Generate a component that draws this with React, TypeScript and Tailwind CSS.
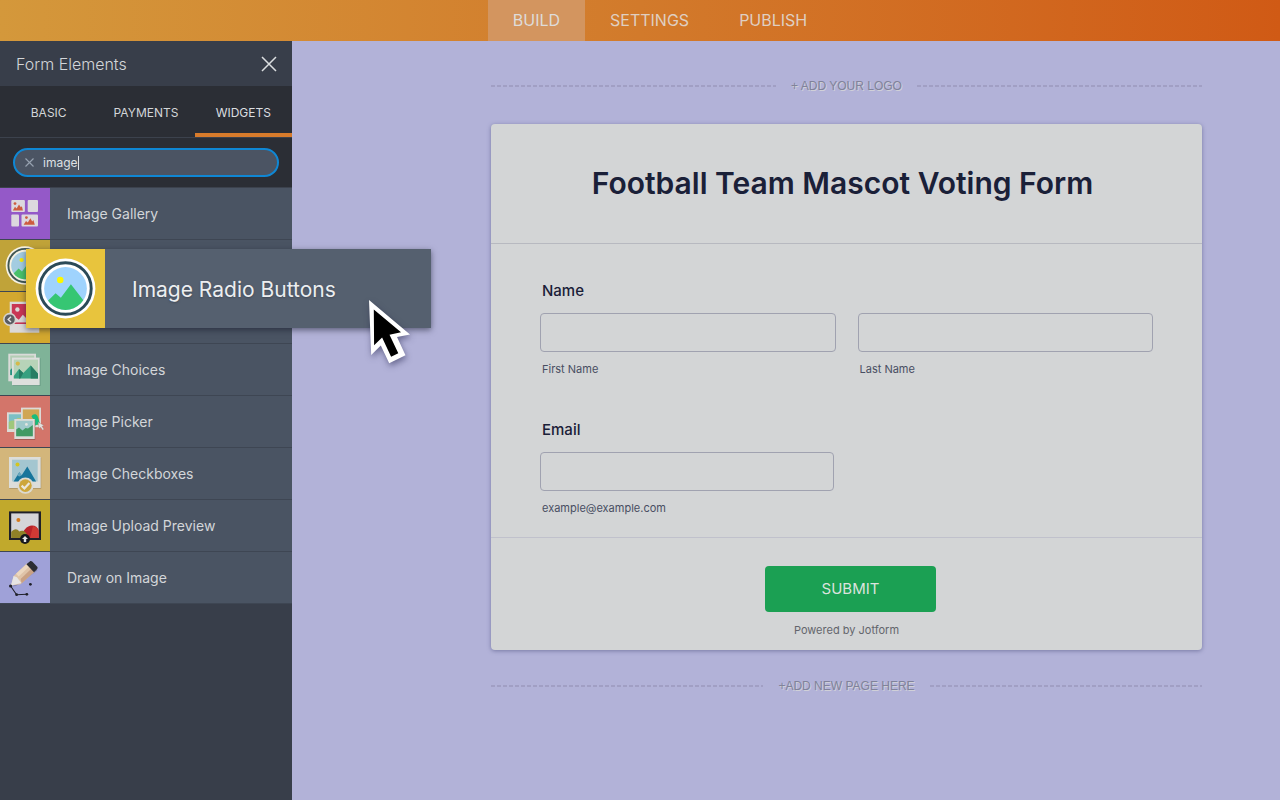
import { useState, type ReactNode } from 'react';

type Widget = {
  id: string;
  label: string;
  tile: string;
  icon: ReactNode;
  // rows that sit under the dragged card draw no label
  covered?: boolean;
};

function Glyph({ children, className = 'h-full w-full' }: { children: ReactNode; className?: string }) {
  return (
    <svg viewBox="0 0 50 51" className={className} aria-hidden="true">
      {children}
    </svg>
  );
}

function RadioGlyph({ clip }: { clip: string }) {
  return (
    <>
      <clipPath id={clip}>
        <circle cx="25" cy="25.5" r="13.8" />
      </clipPath>
      <circle cx="25" cy="25.5" r="19.3" fill="#fff" />
      <circle cx="25" cy="25.5" r="16.6" fill="none" stroke="#2b4a58" strokeWidth="1.9" />
      <circle cx="25" cy="25.5" r="13.8" fill="#9fd3fd" />
      <g clipPath={`url(#${clip})`}>
        <circle cx="21.6" cy="20" r="2.1" fill="#fdf700" />
        <path d="M12 35l6.6-6.4 3.4 2.8 6.5-8.6L38 35v6H12z" fill="#36c673" />
      </g>
    </>
  );
}

function GalleryIcon() {
  return (
    <Glyph>
      <g fill="#dcd8de">
        <rect x="11.3" y="12" width="13.6" height="12" rx="1" />
        <rect x="27.7" y="12" width="10.3" height="12" rx="1" />
        <rect x="11.3" y="26.5" width="7.7" height="12" rx="1" />
        <rect x="21.5" y="26.5" width="16.5" height="12" rx="1" />
      </g>
      <g fill="#cd5c40">
        <circle cx="15" cy="15.6" r="1.4" />
        <path d="M12.8 22.4l2.2-3.6 1.6 1.6 2.4-3.8 1.8 2.6 1.1-1 1 4.2z" />
        <circle cx="26.4" cy="29.6" r="1.4" />
        <path d="M23.6 36.8l2.4-3.8 1.8 1.6 2.6-4.4 1.8 3.2 1.2-1.4 1.4 4.8z" />
      </g>
    </Glyph>
  );
}

function SliderIcon() {
  return (
    <Glyph>
      <path d="M9.7 9.7h29.6v31H9.7z" fill="#dcd9d9" />
      <path d="M11.8 12h26v17.6h-26z" fill="#c93655" />
      <circle cx="17.4" cy="17.5" r="2.2" fill="#dcd9d9" />
      <path d="M11.8 29.6l4-4 3 2.2 4-5 5 5 3-2 7 4.8v3h-26z" fill="#dcd9d9" />
      <path d="M12 31.2h26" stroke="#c93655" strokeWidth="1.6" />
      <circle cx="9.7" cy="27.4" r="6.6" fill="#d5d3d0" />
      <circle cx="9.7" cy="27.4" r="5" fill="#5b5d62" />
      <path d="M11 24.8l-2.8 2.6 2.8 2.6" fill="none" stroke="#e4e4e4" strokeWidth="1.4" />
    </Glyph>
  );
}

function ChoicesIcon() {
  return (
    <Glyph>
      <path d="M8.3 9.7H36v27.6H8.3z" fill="#dadbd9" />
      <path d="M10.2 11.6h24v20h-24z" fill="#b3cdb4" />
      <path d="M10.2 26l2-2v7h-2z" fill="#279180" />
      <path d="M12.6 14.2h27.8V42H12.6z" fill="#5f957d" />
      <path d="M12 13.6h27.7v27.6H12z" fill="#dedfdd" />
      <path d="M13.8 15.6H38v18.8H13.8z" fill="#b7d3b8" />
      <circle cx="17.8" cy="19.6" r="2.1" fill="#d5b94a" />
      <path d="M13.8 32l5.2-7 4.3 4 7.4-7.6 7.3 8.4v4.6H13.8z" fill="#37a080" />
      <path d="M19 25l4.3 4-3 5.4H19zM30.7 21.4l7.3 8.4v4.6h-7.3z" fill="#267d64" />
    </Glyph>
  );
}

function PickerIcon() {
  return (
    <Glyph>
      <path d="M7 16.3h19.5V36H7z" fill="#dcdad6" />
      <path d="M8.8 18.2h16v14.6h-16z" fill="#7cc0c5" />
      <path d="M8.8 26c4-3 7-1 9 0v7H8.8z" fill="#9fc77c" />
      <path d="M17 22.5h4v3h-4z" fill="#d9d23a" />
      <path d="M21 11.6h20v19.6H21z" fill="#dcdad6" />
      <path d="M22.8 13.4h16.4V29H22.8z" fill="#d0a653" />
      <path d="M31.5 20.5c1-3 5-3 6-.5 1.4 2.5 1.2 5 2.5 7.5l-6 2.5c1.5-3 .5-5-.5-6.5z" fill="#17bd7c" />
      <path d="M14.8 24h20.4v20H14.8z" fill="#a45b54" />
      <path d="M14.3 23h20.4v20H14.3z" fill="#dedcd8" />
      <path d="M16.2 24.8h16.6v15.4H16.2z" fill="#9fc9cb" />
      <circle cx="26.4" cy="28.4" r="1.4" fill="#e3e5e0" />
      <path d="M16.2 33.5l2.8-2 3.5 3 3-2.5 2.5.5 4.8-3.5v11.2H16.2z" fill="#419a63" />
      <path d="M38 26l6 3.5-2 .8 2 3-1.4.9-2-3-1.4 1.6z" fill="#e3e0de" stroke="#8f6d67" strokeWidth=".3" />
    </Glyph>
  );
}

function CheckboxesIcon() {
  return (
    <Glyph>
      <path d="M9.4 9.4H41.2V40.8H9.4z" fill="#a99163" />
      <path d="M9 9h31.7v31H9z" fill="#dcddda" />
      <path d="M12 11.7h25.7V33.4H12z" fill="#a4c6d0" />
      <circle cx="17.5" cy="16.4" r="2" fill="#d4c51f" />
      <path d="M13.5 33.4l5.8-9.2 2.4 3 5.6-8.8 8.8 15z" fill="#17759b" />
      <path d="M19.3 24.2l-2 3.4 2 1 2.4-1.4z" fill="#69a7be" />
      <circle cx="25.4" cy="37.6" r="8.2" fill="#dcdad2" />
      <circle cx="25.4" cy="37.6" r="6.3" fill="#cda63b" />
      <path d="M21.6 37.6l2.8 2.8 5-5.4" fill="none" stroke="#ebe7db" strokeWidth="2.2" />
    </Glyph>
  );
}

function UploadIcon() {
  return (
    <Glyph>
      <path d="M9 11.4h32V40H9z" fill="#1f2029" />
      <path d="M11.2 13.4h27.4V38H11.2z" fill="#d5d5d9" />
      <circle cx="18.4" cy="20" r="2" fill="#d67a1c" />
      <path d="M21 38c1-7 6-12.5 11-12.5 3.5 0 5.6 2 6.6 4.500v8z" fill="#b9232a" />
      <path d="M33 26c3 1 5.6 3 5.6 6v6H30c1-4 2-8 3-12z" fill="#d03a35" />
      <path d="M11.2 32c3-3.5 6-3.5 8-.6 3-1.6 7-1 9 6.600h-17z" fill="#8f8127" />
      <circle cx="25" cy="39" r="5" fill="#17181d" />
      <path d="M25 36l3 3h-1.8v3h-2.4v-3H22z" fill="#e4e4e4" />
    </Glyph>
  );
}

function DrawIcon() {
  return (
    <Glyph>
      <path d="M12 34.6l4-.6 21.5-15.5-2-2z" fill="#8587b6" />
      <path d="M11 33.4l2.6-9.4L27 11.4l7.6 8L20.4 32.2z" fill="#dfc3a8" />
      <path d="M16 21.8L27 11.4l2.6 2.8-11 10.2z" fill="#ecd7bf" />
      <path d="M20.6 27l11-10.4 3 2.8-13 12z" fill="#c9a184" />
      <path d="M11 33.4l2.6-9.4 3.4 1.2 1.8 2.6 2.6 3.2z" fill="#e6e4e4" />
      <path d="M26.4 12.2l3.4-2.8c.8-.6 1.6-.6 2.4.2l4.8 5c.8.8.8 1.6.2 2.4L34 20.2z" fill="#2c2d33" />
      <path d="M10.6 34l6 8.7 10.2-.4" fill="none" stroke="#20212a" strokeWidth="1.1" />
      <g fill="#20212a">
        <circle cx="10.6" cy="34" r="1.6" />
        <circle cx="16.6" cy="42.7" r="1.4" />
        <circle cx="26.8" cy="42.3" r="1.4" />
        <circle cx="30.4" cy="32.3" r="1.4" />
      </g>
    </Glyph>
  );
}

const widgets: Widget[] = [
  { id: 'gallery', label: 'Image Gallery', tile: 'bg-[#9459c8]', icon: <GalleryIcon /> },
  {
    id: 'radio',
    label: 'Image Radio Buttons',
    tile: 'bg-[#c0a339]',
    icon: (
      <Glyph>
        <g opacity=".86">
          <RadioGlyph clip="radio-row" />
        </g>
      </Glyph>
    ),
    covered: true,
  },
  { id: 'slider', label: 'Image Slider', tile: 'bg-[#d3a82f]', icon: <SliderIcon />, covered: true },
  { id: 'choices', label: 'Image Choices', tile: 'bg-[#7fb398]', icon: <ChoicesIcon /> },
  { id: 'picker', label: 'Image Picker', tile: 'bg-[#d3756a]', icon: <PickerIcon /> },
  { id: 'checkboxes', label: 'Image Checkboxes', tile: 'bg-[#d3b67b]', icon: <CheckboxesIcon /> },
  { id: 'upload', label: 'Image Upload Preview', tile: 'bg-[#c1a92c]', icon: <UploadIcon /> },
  { id: 'draw', label: 'Draw on Image', tile: 'bg-[#9fa1d8]', icon: <DrawIcon /> },
];

const panelTabs = ['BASIC', 'PAYMENTS', 'WIDGETS'];

function TopBar() {
  return (
    <header className="bg-linear-to-r from-[#d4983b] via-[#d27a2b] to-[#d05a15]">
      <nav className="flex h-[41px] justify-center pl-10 text-base text-[#dfcfc2]">
        <a href="#build" className="flex items-center bg-[#d3955f] px-[25px] pb-0.5 text-[#dedcda]">
          BUILD
        </a>
        <a href="#settings" className="flex items-center px-[25px] pb-0.5">
          SETTINGS
        </a>
        <a href="#publish" className="flex items-center px-[25px] pb-0.5">
          PUBLISH
        </a>
      </nav>
    </header>
  );
}

function ElementsPanel() {
  const [tab, setTab] = useState('WIDGETS');
  const [query, setQuery] = useState('image');

  return (
    <aside className="w-[292px] shrink-0 bg-[#383e4a] text-[#d3d6d9]">
      <div className="flex h-[45px] items-center justify-between pr-[15px] pl-4">
        <h2 className="text-base font-light">Form Elements</h2>
        <button type="button" aria-label="Close panel">
          <svg viewBox="0 0 16 16" className="size-4" fill="none" stroke="#dcdfe1" strokeWidth="1.5">
            <path d="M1 1l14 14M15 1L1 15" />
          </svg>
        </button>
      </div>

      <div className="grid grid-cols-3 border-b border-[#3c424d] bg-[#2b2e35]">
        {panelTabs.map((name) => (
          <button
            key={name}
            type="button"
            onClick={() => setTab(name)}
            className={`h-[51px] border-b-4 pt-1.5 text-xs ${
              name === tab ? 'border-[#d87b2b] text-[#dcdee0]' : 'border-transparent'
            }`}
          >
            {name}
          </button>
        ))}
      </div>

      <div className="border-b border-[#3c424d] bg-[#2b2e35] px-[13px] py-[10px]">
        <div className="flex h-[29px] items-center rounded-full border-2 border-[#0f87d4] bg-[#4b5463] pl-[10px]">
          <button type="button" aria-label="Clear search" onClick={() => setQuery('')}>
            <svg viewBox="0 0 9 9" className="size-[9px]" fill="none" stroke="#98a3b1" strokeWidth="1.1">
              <path d="M.5 .5l8 8M8.5 .5l-8 8" />
            </svg>
          </button>
          <input
            type="text"
            aria-label="Search widgets"
            value={query}
            onChange={(e) => setQuery(e.target.value)}
            className="ml-[9px] field-sizing-content text-xs text-[#dde0e3] outline-none"
          />
          <span aria-hidden="true" className="h-3.5 w-px bg-[#dde0e3]" />
        </div>
      </div>

      <ul>
        {widgets.map((w) => (
          <li
            key={w.id}
            aria-label={w.label}
            className="flex h-[52px] items-center border-b border-[#3e4653] bg-[#4a5463]"
          >
            <span className={`h-full w-[50px] shrink-0 ${w.tile}`}>{w.icon}</span>
            {!w.covered && <span className="pl-[17px] text-sm">{w.label}</span>}
          </li>
        ))}
      </ul>
    </aside>
  );
}

function Dashes() {
  return (
    <span className="h-0.5 flex-1 bg-[repeating-linear-gradient(90deg,#a19fc4_0_4px,transparent_4px_6px)]" />
  );
}

function DashedLabel({ children }: { children: ReactNode }) {
  return (
    <button type="button" className="flex w-full items-center gap-[15px]">
      <Dashes />
      <span className="font-['Liberation_Sans',sans-serif] text-xs leading-4 text-[#80829a] [text-shadow:1px_1px_0_#d0d0d8]">
        {children}
      </span>
      <Dashes />
    </button>
  );
}

function Field({ id, hint }: { id: string; hint: string }) {
  return (
    <div className="flex flex-col gap-[9px]">
      <input
        id={id}
        type="text"
        className="h-[39px] w-full rounded border border-[#a0a2b0] bg-transparent px-3 text-base outline-none"
      />
      <label htmlFor={id} className="pl-0.5 text-[11px] leading-4 text-[#484e62]">
        {hint}
      </label>
    </div>
  );
}

function FormCard() {
  return (
    <form className="rounded bg-[#d3d5d6] text-[#1a2038] shadow-[0_1px_4px_#7779a4]">
      <div className="border-b border-[#b7b9c0] px-12 py-10">
        <h1 className="h-[39px] pr-2 text-center text-3xl leading-[39px] font-semibold">
          Football Team Mascot Voting Form
        </h1>
      </div>

      <div className="flex flex-col gap-[43px] px-[49px] pt-[37px] pb-[21px]">
        <fieldset>
          <legend className="mb-3 pl-0.5 text-[15px] leading-5 font-medium">Name</legend>
          <div className="grid grid-cols-2 gap-[22px]">
            <Field id="first-name" hint="First Name" />
            <Field id="last-name" hint="Last Name" />
          </div>
        </fieldset>
        <fieldset>
          <legend className="mb-3 pl-0.5 text-[15px] leading-5 font-medium">Email</legend>
          <div className="grid grid-cols-2 gap-[26px]">
            <Field id="email" hint="example@example.com" />
          </div>
        </fieldset>
      </div>

      <div className="border-t border-[#c0c1cc] pt-7 pb-3">
        <div className="flex flex-col items-center gap-[10px] pl-2">
          <button type="submit" className="h-[46px] w-[171px] rounded bg-[#1ba053] text-[15px] text-[#dbe3de]">
            SUBMIT
          </button>
          <p className="pr-2 text-[11px] leading-4 text-[#63656c]">Powered by Jotform</p>
        </div>
      </div>
    </form>
  );
}

function DraggedWidget() {
  return (
    <div className="absolute top-[249px] left-[26px] flex h-[79px] w-[405px] items-center bg-[#55606f] shadow-[0_2px_6px_rgba(20,24,40,0.55)]">
      <span className="size-[79px] shrink-0 bg-[#e8c43d]">
        <Glyph>
          <RadioGlyph clip="radio-drag" />
        </Glyph>
      </span>
      <span className="pt-0.5 pl-[27px] text-[21px] text-[#eceef0] [text-shadow:0_1px_2px_#3f4856]">
        Image Radio Buttons
      </span>
      <svg
        viewBox="0 0 44 66"
        className="absolute top-[50px] left-[342px] h-[66px] w-[44px] drop-shadow-[1px_3px_3px_rgba(30,30,70,0.5)]"
        aria-hidden="true"
      >
        <path d="M1 1l41 34.500-13 2.500 8.500 18.200-16.300 8L12.800 46.500 3.200 56z" fill="#fff" />
        <path d="M5.800 10.500L33 33.200l-11.500 2.500 8.800 18.500-7.200 3.600-9-19.200-8 7.600z" fill="#000" />
      </svg>
    </div>
  );
}

export default function App() {
  return (
    <div className="relative flex min-h-screen flex-col bg-[#b2b2d8] font-['Inter',sans-serif]">
      <TopBar />
      <div className="flex flex-1">
        <ElementsPanel />
        <main className="flex-1 pt-[37px] pl-[121px]">
          <div className="mx-auto flex max-w-[711px] flex-col">
            <DashedLabel>+ ADD YOUR LOGO</DashedLabel>
            <div className="pt-[30px] pb-7">
              <FormCard />
            </div>
            <DashedLabel>+ADD NEW PAGE HERE</DashedLabel>
          </div>
        </main>
      </div>
      <DraggedWidget />
    </div>
  );
}
